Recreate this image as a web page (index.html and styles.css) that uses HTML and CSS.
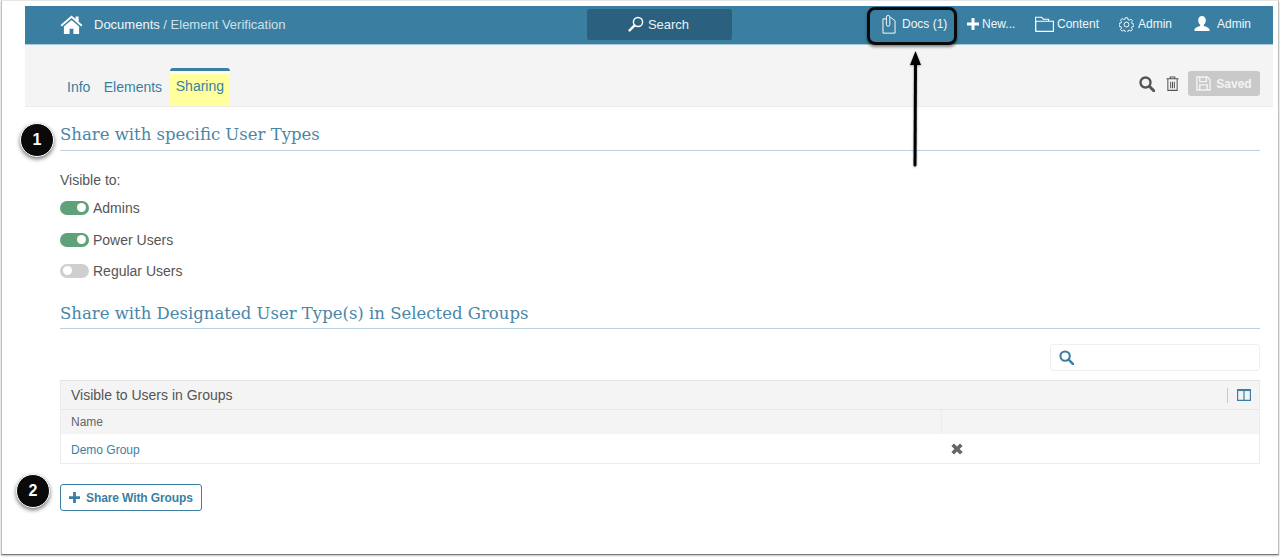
FILE: index.html
```html
<!DOCTYPE html>
<html lang="en">
<head>
<meta charset="utf-8">
<title>Element Verification</title>
<link rel="stylesheet" href="styles.css">
</head>
<body>
<div class="frame">
  <div class="app">
    <header class="topbar">
      <div class="crumbs">
        <svg class="home" viewBox="0 0 24 20" width="23" height="19"><path fill="#fff" d="M12 0.5 0.5 10.6l1.3 1.5L12 3.2l10.2 8.9 1.3-1.5L19.5 7V1.5h-3.2v2.7zM4 12.2V20h6v-5.5h4V20h6v-7.8L12 5.3z"/></svg>
        <span class="crumb-main">Documents</span><span class="crumb-sub">&nbsp;/ Element Verification</span>
      </div>
      <div class="search-wrap">
        <div class="search-btn">
          <svg viewBox="0 0 16 16" width="16" height="16"><circle cx="10" cy="6" r="4.6" fill="none" stroke="#fff" stroke-width="1.5"/><path d="M6.6 9.4 1.6 14.4" stroke="#fff" stroke-width="2.4" stroke-linecap="round"/></svg>
          <span>Search</span>
        </div>
      </div>
      <nav class="nav">
        <span class="nav-item docs">
          <svg viewBox="0 0 16 22" width="14" height="19"><path fill="none" stroke="#fff" stroke-width="1.1" d="M1 4.5h3.5M9.5 2.5l5.5 4V21H1V4.5"/><path fill="none" stroke="#fff" stroke-width="1.1" d="M5 11V2.5a2 2 0 0 1 4 0V11a2 2 0 0 1-4 0z"/></svg>
          Docs (1)
        </span>
        <span class="nav-item new">
          <svg viewBox="0 0 12 12" width="12" height="12"><path fill="#fff" d="M4.500 0h3v4.500H12v3H7.500V12h-3V7.500H0v-3h4.500z"/></svg>
          New...
        </span>
        <span class="nav-item content-link">
          <svg viewBox="0 0 19 16" width="19" height="16"><path fill="none" stroke="#fff" stroke-width="1.1" d="M.6 15.4V1.200h6l1.600 2h5.400v2M.6 15.400h.2V5.200h17.600v10.200z"/></svg>
          Content
        </span>
        <span class="nav-item admin-gear">
          <svg viewBox="0 0 16 16" width="15" height="15"><circle cx="8" cy="8" r="2.600" fill="none" stroke="#fff" stroke-width="1"/><path fill="none" stroke="#fff" stroke-width="1" d="M6.800.8h2.400l.4 2 1.400.6 1.700-1.100 1.700 1.700-1.100 1.700.6 1.400 2 .4v2.400l-2 .4-.6 1.400 1.100 1.700-1.700 1.700-1.700-1.100-1.400.6-.4 2H6.800l-.4-2-1.400-.6-1.700 1.100-1.700-1.700 1.100-1.700-.6-1.400-2-.4V6.800l2-.4.6-1.400-1.100-1.700 1.700-1.700L5 2.700l1.400-.6z"/></svg>
          Admin
        </span>
        <span class="nav-item admin-user">
          <svg viewBox="0 0 16 16" width="16" height="16"><path fill="#fff" d="M8 0c2.300 0 3.800 1.700 3.800 4.200 0 2-.9 3.600-2 4.500v1.200c2.200.7 5.200 1.600 5.700 3.400V15H.5v-1.700c.5-1.800 3.500-2.700 5.700-3.400V8.700c-1.100-.9-2-2.500-2-4.500C4.200 1.700 5.700 0 8 0z"/></svg>
          Admin
        </span>
      </nav>
    </header>

    <div class="subbar">
      <div class="tabs">
        <span class="tab">Info</span>
        <span class="tab">Elements</span>
        <span class="tab active">Sharing</span>
      </div>
      <div class="tools">
        <svg viewBox="0 0 16 16" width="16" height="16"><circle cx="6.500" cy="6.500" r="5" fill="none" stroke="#555" stroke-width="2.400"/><path d="M10.300 10.300 14.800 14.800" stroke="#555" stroke-width="3" stroke-linecap="round"/></svg>
        <svg viewBox="0 0 14 16" width="13" height="15"><path fill="none" stroke="#555" stroke-width="1.100" d="M.5 3h13M4.500 3V1h5v2M2 3v12.400h10V3M5 6v7M7 6v7M9 6v7"/></svg>
        <span class="saved">
          <svg viewBox="0 0 16 16" width="15" height="15"><path fill="none" stroke="#f3f3f3" stroke-width="1.500" d="M1 1h11l3 3v11H1zM4 1v5h7V1M4 15V9.500h8V15"/></svg>
          Saved
        </span>
      </div>
    </div>

    <main class="content">
      <h2 class="heading first">Share with specific User Types</h2>
      <p class="visible">Visible to:</p>
      <div class="switch-row"><span class="switch on"><i class="knob"></i></span>Admins</div>
      <div class="switch-row"><span class="switch on"><i class="knob"></i></span>Power Users</div>
      <div class="switch-row"><span class="switch off"><i class="knob"></i></span>Regular Users</div>

      <h2 class="heading second">Share with Designated User Type(s) in Selected Groups</h2>
      <div class="filter-row">
        <div class="filter">
          <svg viewBox="0 0 16 16" width="15" height="15"><circle cx="6.500" cy="6.500" r="5" fill="none" stroke="#3a7fa2" stroke-width="2.200"/><path d="M10.300 10.300 15 15" stroke="#3a7fa2" stroke-width="2.600" stroke-linecap="round"/></svg>
        </div>
      </div>

      <section class="table">
        <div class="table-title">
          <span>Visible to Users in Groups</span>
          <span class="table-tools">
            <i class="sep"></i>
            <svg viewBox="0 0 14 12" width="14" height="12"><path fill="none" stroke="#3a7fa2" stroke-width="1.200" d="M.6.600h12.800v10.800H.6zM7 .6v10.800"/><path stroke="#3a7fa2" stroke-width="1.500" d="M0 1.300h14"/></svg>
          </span>
        </div>
        <div class="table-head">
          <div class="col-name">Name</div>
          <div class="col-action"></div>
        </div>
        <div class="table-row">
          <div class="col-name link">Demo Group</div>
          <div class="col-action">
            <svg viewBox="0 0 12 12" width="12" height="12"><path fill="#666" d="M3 .4 6 3.400 9 .4 11.600 3 8.600 6l3 3L9 11.600l-3-3-3 3L.4 9l3-3-3-3z"/></svg>
          </div>
        </div>
      </section>

      <button class="share-btn" type="button">
        <svg viewBox="0 0 12 12" width="11" height="11"><path fill="#3a7fa2" d="M4.500 0h3v4.500H12v3H7.500V12h-3V7.500H0v-3h4.500z"/></svg>
        Share With Groups
      </button>
    </main>
  </div>

  <!-- screenshot annotations lying over the page -->
  <span class="docs-highlight"></span>
  <svg class="arrow" viewBox="0 0 20 120" width="20" height="120"><path d="M10 115 10.500 12" stroke="#000" stroke-width="3" stroke-linecap="round"/><path d="M10.500 1 16 15H5z" fill="#000"/></svg>
  <span class="badge badge-one">1</span>
  <span class="badge badge-two">2</span>
</div>
</body>
</html>
```

FILE: styles.css
```css
* { box-sizing: border-box; }
html, body { margin: 0; padding: 0; background: #fff; }
body {
  width: 1280px;
  height: 557px;
  overflow: hidden;
  font-family: "Liberation Sans", Arial, sans-serif;
  font-size: 14px;
  color: #555;
}
.frame {
  position: relative;
  width: 1278px;
  height: 555px;
  margin-left: 1px;
  padding: 6px 5px 0 23px;
  background: #fff;
  border-top: 1px solid #e6e6e6;
  border-left: 1px solid #bdbdbd;
  border-right: 1px solid #bdbdbd;
  border-bottom: 1px solid #777;
  box-shadow: 0 1px 2px rgba(0,0,0,.25);
}
.app { width: 1248px; margin-top: -1px; }

/* top bar */
.topbar {
  display: flex;
  align-items: center;
  height: 39px;
  padding-bottom: 2px;
  background: #3a7fa2;
  border-bottom: 1px solid #a9c9d8;
  color: #fff;
  font-size: 13px;
}
.crumbs {
  display: flex;
  align-items: center;
  width: 562px;
  padding-left: 35px;
}
.home { margin-right: 11px; }
.crumb-main { color: #f1f6f9; }
.crumb-sub { color: #cfe0e9; }
.search-wrap { width: 283px; }
.search-btn {
  display: flex;
  align-items: center;
  justify-content: center;
  gap: 4px;
  width: 145px;
  height: 31px;
  padding-right: 2px;
  background: #2b617e;
  border-radius: 2px;
  font-size: 13px;
  color: #e9f1f5;
}
.nav { display: flex; align-items: center; flex: 1; }
.nav-item {
  display: flex;
  align-items: center;
  font-size: 12px;
  color: #f1f6f9;
  white-space: nowrap;
}
.docs { gap: 6px; width: 85px; margin-left: 12px; }
.new { gap: 3px; width: 68px; margin-left: 0; }
.content-link { gap: 3px; width: 84px; }
.admin-gear { gap: 4px; width: 75px; }
.admin-user { gap: 7px; }

/* sub bar */
.subbar {
  display: flex;
  align-items: flex-end;
  justify-content: space-between;
  height: 62px;
  background: #f4f4f4;
  border-bottom: 1px solid #ececec;
  padding: 0 13px 0 35px;
}
.tabs { display: flex; align-items: flex-end; height: 100%; }
.tab {
  display: flex;
  align-items: center;
  height: 38px;
  padding: 0 7px;
  font-size: 14px;
  color: #3a7fa2;
}
.tab + .tab { margin-left: -0.6px; }
.tab.active {
  height: 38px;
  margin-left: 0.65px;
  padding: 0 6px 6px;
  background: linear-gradient(#fcfcfc 3px, #ffff9e 3px);
  border-top: 3px solid #3a7fa2;
  border-radius: 3px 3px 0 0;
  color: #3a7fa2;
}
.tools {
  display: flex;
  align-items: center;
  gap: 11px;
  align-self: stretch;
  padding-top: 26px;
  padding-bottom: 10px;
}
.tools .saved { margin-left: -2px; }
.saved {
  display: flex;
  align-items: center;
  gap: 5px;
  width: 72px;
  height: 25px;
  justify-content: center;
  background: #c9c9c9;
  border-radius: 3px;
  color: #f3f3f3;
  font-size: 12px;
  font-weight: bold;
}

/* content */
.content { padding: 0 13px 0 35px; }
.heading {
  margin: 0;
  height: 30px;
  border-bottom: 1px solid #b9d4df;
  font-family: "DejaVu Serif", "Liberation Serif", serif;
  font-size: 16.500px;
  font-weight: normal;
  line-height: 28px;
  color: #4a86a8;
}
.heading.first { margin-top: 14px; }
.heading.second { margin-top: 20px; padding-top: 1px; }
.visible { margin: 21px 0 0; height: 17px; font-size: 14px; line-height: 17px; }
.switch-row {
  display: flex;
  align-items: center;
  gap: 4px;
  height: 17px;
  margin-top: 14px;
  font-size: 14px;
}
.visible + .switch-row { margin-top: 10px; }
.visible + .switch-row + .switch-row { margin-top: 15px; }
.switch {
  display: flex;
  align-items: center;
  width: 29px;
  height: 14px;
  padding: 0 3px;
  border-radius: 7px;
}
.switch.on { justify-content: flex-end; background: #5fa178; }
.switch.off { background: #cfcfcf; }
.knob { width: 9px; height: 9px; border-radius: 50%; background: #fff; }

.filter-row { display: flex; justify-content: flex-end; margin-top: 15px; }
.filter {
  display: flex;
  align-items: center;
  width: 210px;
  height: 27px;
  padding-left: 8px;
  border: 1px solid #efefef;
  border-radius: 3px;
}
.table { margin-top: 9px; border: 1px solid #ececec; border-top-color: #e4e4e4; }
.table-title {
  display: flex;
  align-items: center;
  justify-content: space-between;
  height: 29px;
  padding: 0 8px 0 10px;
  background: #f4f4f4;
  border-bottom: 1px solid #e6e6e6;
  font-size: 14px;
}
.table-tools { display: flex; align-items: center; gap: 9px; }
.sep { width: 1px; height: 15px; background: #c9c9c9; }
.table-head, .table-row { display: grid; grid-template-columns: 880px 1fr; }
.table-head {
  height: 24px;
  background: #f4f4f4;
  font-size: 12px;
  color: #666;
  align-items: stretch;
}
.table-head .col-action { border-left: 1px solid #ebebeb; }
.col-name, .col-action { display: flex; align-items: center; padding-left: 10px; }
.table-row { height: 29px; font-size: 12px; }
.table-row .link { padding-top: 2px; }
.link { color: #3a7fa2; }
.share-btn {
  display: flex;
  align-items: center;
  gap: 6px;
  width: 142px;
  height: 27px;
  margin-top: 20px;
  padding: 0 0 0 8px;
  background: #fff;
  border: 1px solid #3a7fa2;
  border-radius: 3px;
  color: #3a7fa2;
  font-family: inherit;
  font-size: 12px;
  font-weight: bold;
  letter-spacing: -0.1px;
}

/* annotations */
.docs-highlight {
  position: absolute;
  left: 865px;
  top: 6px;
  width: 90px;
  height: 38px;
  border: 3px solid #0a0a0a;
  border-radius: 8px;
  box-shadow: 0 2px 3px rgba(0,0,0,.45);
}
.arrow {
  position: absolute;
  left: 903px;
  top: 49px;
  filter: drop-shadow(0 1px 1px rgba(0,0,0,.35));
}
.badge {
  position: absolute;
  display: flex;
  align-items: center;
  justify-content: center;
  width: 34px;
  height: 34px;
  background: #0a0a0a;
  border: 1px solid #fff;
  border-radius: 50%;
  box-shadow: 0 2px 4px rgba(0,0,0,.55);
  color: #fff;
  font-size: 16px;
  font-weight: bold;
}
.badge-one { left: 18px; top: 122px; }
.badge-two { left: 14px; top: 473px; }
```
